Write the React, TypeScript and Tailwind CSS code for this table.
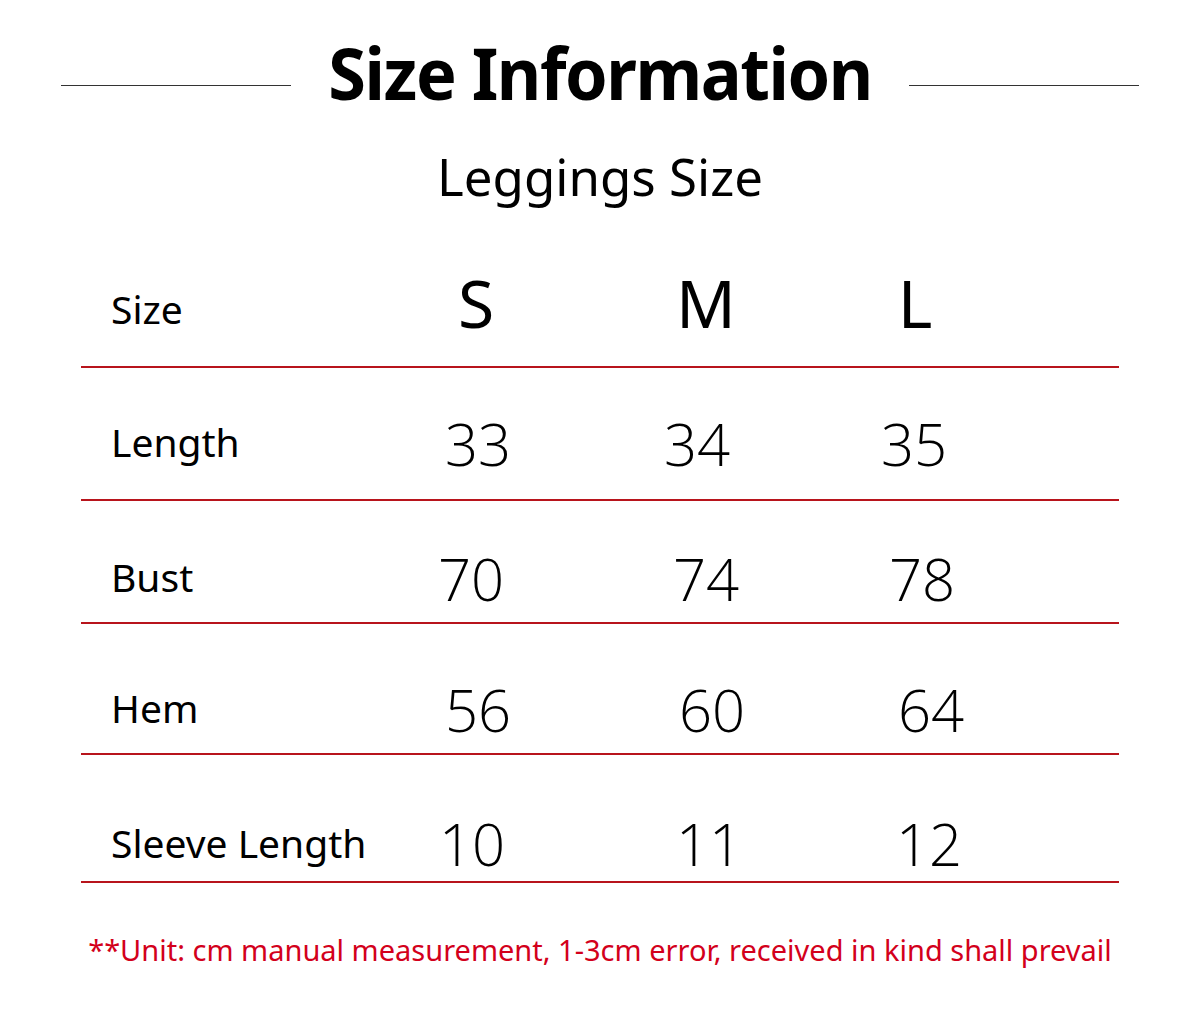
const rows = [
  {
    label: 'Size',
    h: 'h-[132px]',
    pt: 'pt-[14px]',
    head: true,
    cells: [
      { v: 'S', cls: 'translate-x-[0px]' },
      { v: 'M', cls: 'translate-x-[0px]' },
      { v: 'L', cls: 'translate-x-[-1px]' },
    ],
  },
  {
    label: 'Length',
    h: 'h-[133px]',
    pt: 'pt-[16px]',
    cells: [
      { v: '33', cls: 'translate-x-[2px]' },
      { v: '34', cls: 'translate-x-[-9px]' },
      { v: '35', cls: 'translate-x-[-2px]' },
    ],
  },
  {
    label: 'Bust',
    h: 'h-[123px]',
    pt: 'pt-[30px]',
    cells: [
      { v: '70', cls: 'translate-x-[-5px]' },
      { v: '74', cls: 'translate-x-[0px]' },
      { v: '78', cls: 'translate-x-[6px]' },
    ],
  },
  {
    label: 'Hem',
    h: 'h-[131px]',
    pt: 'pt-[38px]',
    cells: [
      { v: '56', cls: 'translate-x-[2px]' },
      { v: '60', cls: 'translate-x-[6px]' },
      { v: '64', cls: 'translate-x-[15px]' },
    ],
  },
  {
    label: 'Sleeve Length',
    h: 'h-[128px]',
    pt: 'pt-[48px]',
    cells: [
      { v: '10', cls: 'translate-x-[-4px]' },
      { v: '11', cls: 'translate-x-[3px]' },
      { v: '12', cls: 'translate-x-[13px]' },
    ],
  },
]

const colW = ['w-[230px]', 'w-[230px]', 'w-[190px]']

export default function App() {
  return (
    <div className="h-[1015px] w-[1200px] bg-white font-['Noto_Sans','Open_Sans',sans-serif] text-black">
      {/* heading */}
      <div className="flex items-end justify-center gap-[38px] pt-[36px]">
        <div className="mb-[22px] h-px w-[230px] bg-[#333]" />
        <h1 className="flex w-[542px] justify-center whitespace-nowrap text-[72px] font-bold leading-none tracking-[-1.5px]">
          <span className="inline-block shrink-0 scale-x-[0.95]">Size Information</span>
        </h1>
        <div className="mb-[22px] h-px w-[230px] bg-[#333]" />
      </div>
      <div className="mt-[43px] text-center text-[51px] leading-none">Leggings Size</div>

      {/* table */}
      <div className="mx-[81px] mt-[34px]">
        {rows.map((row) => (
          <div key={row.label} className={`flex items-center border-b-2 border-[#b8141c] ${row.h} ${row.pt}`}>
            <div className="w-[280px] shrink-0 whitespace-nowrap pl-[30px] text-[39px] leading-none">{row.label}</div>
            {row.cells.map((c, i) => (
              <div
                key={i}
                className={
                  row.head
                    ? `${colW[i]} shrink-0 -translate-y-[6px] text-center text-[66px] leading-none ${c.cls}`
                    : `${colW[i]} shrink-0 pt-[4px] text-center font-['Open_Sans',sans-serif] text-[58px] font-light leading-none ${c.cls}`
                }
              >
                {c.v}
              </div>
            ))}
          </div>
        ))}
      </div>

      <p className="mt-[52px] text-center text-[29px] leading-none text-[#d3001b]">
        **Unit: cm manual measurement, 1-3cm error, received in kind shall prevail
      </p>
    </div>
  )
}
